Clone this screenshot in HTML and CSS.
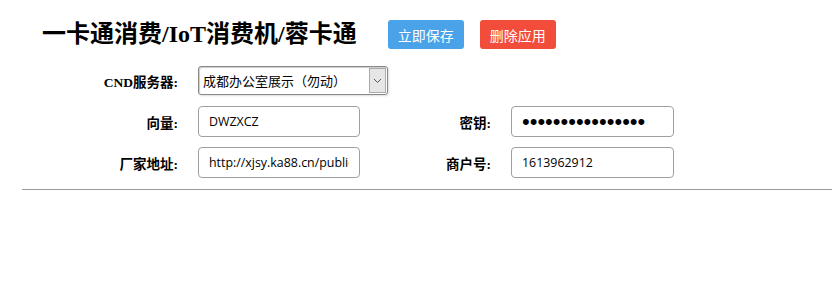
FILE: index.html
```html
<!DOCTYPE html>
<html lang="zh-CN">
<head>
  <meta charset="UTF-8">
  <title>一卡通消费/IoT消费机/蓉卡通</title>
  <link rel="stylesheet" href="styles.css">
</head>
<body>
  <div class="app">
    <div class="header">
      <h1>一卡通消费/IoT消费机/蓉卡通</h1>
      <button class="btn btn-save">立即保存</button>
      <button class="btn btn-delete">删除应用</button>
    </div>

    <form class="settings">
      <label class="field-label" for="server">CND服务器:</label>
      <div class="select-box span-3">
        <span class="select-value">成都办公室展示（勿动）</span>
        <span class="select-arrow">
          <svg width="9" height="6" viewBox="0 0 9 6"><path d="M1 1 L4.5 4.5 L8 1" fill="none" stroke="#555" stroke-width="1"/></svg>
        </span>
      </div>

      <label class="field-label" for="vector">向量:</label>
      <input class="text-input" id="vector" type="text" value="DWZXCZ">
      <label class="field-label" for="secret">密钥:</label>
      <input class="text-input" id="secret" type="password" value="abcdefghijklmnop">

      <label class="field-label" for="vendor">厂家地址:</label>
      <input class="text-input" id="vendor" type="text" value="http://xjsy.ka88.cn/public/">
      <label class="field-label" for="merchant">商户号:</label>
      <input class="text-input" id="merchant" type="text" value="1613962912">
    </form>

    <hr class="divider">
  </div>
</body>
</html>
```

FILE: styles.css
```css
/* General */
body {
  margin: 0;
  background: #fff;
  font-family: "Liberation Serif", "Noto Sans CJK SC", serif;
  color: #000;
}

.app {
  padding: 0 0 0 22px;
}

/* Header */
.header {
  display: flex;
  align-items: center;
  padding: 20px 0 0 20px;
  height: 29px;
}

.header h1 {
  margin: 0 31px 0 0;
  font-size: 24px;
  font-weight: bold;
  line-height: 29px;
}

.btn {
  width: 76px;
  height: 29px;
  margin-right: 16px;
  border: none;
  border-radius: 3px;
  color: #fff;
  font-family: "Noto Sans CJK SC", sans-serif;
  font-size: 14px;
  padding: 0;
  cursor: pointer;
}

.btn-save {
  background-color: #4aa2e8;
}

.btn-delete {
  background-color: #f24c3a;
}

/* Settings grid */
.settings {
  display: grid;
  grid-template-columns: 156px 162px 111px 163px;
  column-gap: 20px;
  row-gap: 10px;
  align-items: center;
  margin-top: 17px;
}

.field-label {
  text-align: right;
  font-size: 13.5px;
  font-weight: bold;
  font-family: "Liberation Serif", "Noto Sans CJK SC", serif;
}

.span-3 {
  grid-column: span 3;
}

.select-box {
  display: flex;
  align-items: stretch;
  width: 190px;
  height: 29px;
  box-sizing: border-box;
  border: 1px solid #888;
  border-radius: 3px;
  box-shadow: inset 1px 1px 1px #ccc, 1px 1px 2px #ddd;
  margin-bottom: 1px;
}

.select-value {
  flex: 1;
  padding-left: 4px;
  line-height: 27px;
  font-family: "Noto Sans CJK SC", sans-serif;
  font-size: 13px;
}

.select-arrow {
  width: 15px;
  margin: 1px 1px 1px 0;
  background: #e6e6e6;
  border: 1px solid #aaa;
  display: flex;
  align-items: center;
  justify-content: center;
}

.text-input {
  box-sizing: border-box;
  width: 100%;
  height: 31px;
  padding: 0 10px;
  border: 1px solid #a0a0a0;
  border-radius: 4px;
  font-family: "Open Sans", "Noto Sans", sans-serif;
  font-size: 12.4px;
  color: #000;
}

input[type="password"] {
  font-family: "Liberation Sans", sans-serif;
  font-size: 22px;
}

.divider {
  margin: 11px 0 0 0;
  border: none;
  border-top: 1px solid #999;
}
```
